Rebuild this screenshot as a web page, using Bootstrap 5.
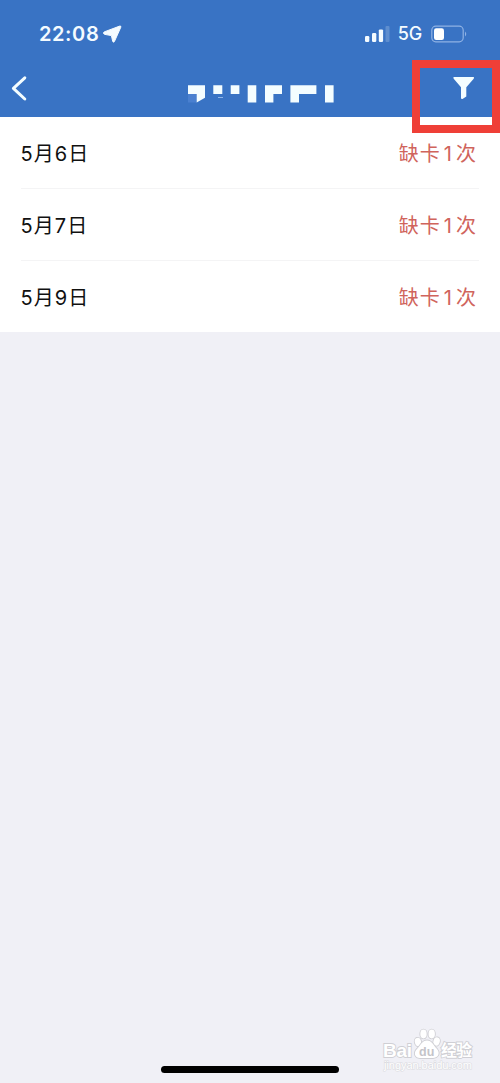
<!DOCTYPE html>
<html lang="zh-CN">
<head>
<meta charset="utf-8">
<meta name="viewport" content="width=device-width, initial-scale=1">
<title>缺卡</title>
<link rel="stylesheet" href="https://cdn.jsdelivr.net/npm/bootstrap@5.3.0/dist/css/bootstrap.min.css">
<style>
body { background: #f0f0f6; font-family: Inter, "Noto Sans CJK SC", sans-serif; }
.screen { width: 500px; height: 1083px; }
.top-area { background: #3973c4; height: 117px; color: #f4fbff; }
.status { height: 60px; padding: 7px 33px 0 39px; }
.clock { font-size: 20px; font-weight: 600; line-height: 24px; letter-spacing: .6px; }
.network { font-size: 18px; font-weight: 500; line-height: 24px; letter-spacing: -.2px; margin: 0 8px 0 8px; }
.title-bar { height: 57px; }
.records .list-group-item { height: 72px; margin: 0 21px; padding: 2px 2px 0 0; border: 0; border-bottom: 1px solid #f4f4f5; font-size: 20px; line-height: 30px; color: #111; }
.records .list-group-item:last-child { height: 71px; border-bottom: 0; }
.day { letter-spacing: 1.1px; margin-left: -.5px; }
.missed { color: #d0645c; letter-spacing: 1px; }
.count { margin: 0 3px 0 3px; }
.focus-box { left: 412px; top: 60px; width: 88px; height: 73px; border: 8px solid #ef3f37; }
.home-bar { width: 178px; height: 7px; border-radius: 4px; bottom: 10px; left: 161px; background: #000; }
.watermark { left: 380px; top: 1026px; }
svg { display: block; flex-shrink: 0; }
</style>
</head>
<body>
<main class="screen position-relative overflow-hidden">
  <header class="top-area">
    <div class="status d-flex align-items-center justify-content-between">
      <div class="d-flex align-items-center">
        <span class="clock">22:08</span>
        <svg class="ms-1" width="20" height="20" viewBox="103 23 20 20" fill="#f4fbff" stroke="#f4fbff" stroke-width="1"><path d="M104.2 30.9 119.7 25.1Q121.3 24.7 120.8 26.2L114.4 40.6Q113.4 42 112.7 40.3L111.4 34.6 104.4 33.3Q102.6 32.1 104.2 30.9Z"/></svg>
      </div>
      <div class="d-flex align-items-center">
        <svg width="26" height="18" viewBox="365 24 26 18" fill="#f4fbff"><rect x="366" y="35" width="4.3" height="6" rx="1.2"/><rect x="373" y="32" width="4.3" height="9" rx="1.2"/><rect x="379.8" y="28.4" width="4.3" height="12.6" rx="1.2"/><rect x="386.5" y="25" width="4" height="16" rx="1" opacity=".2"/></svg>
        <span class="network">5G</span>
        <svg width="37" height="18" viewBox="430 24 37 18"><rect x="431.8" y="25.2" width="31.4" height="15.6" rx="4" fill="none" stroke="#8fb2e4" stroke-width="1.2"/><rect x="434" y="27.2" width="10" height="11.8" rx="2.2" fill="#fff"/><path d="M465 30.5Q467.5 33 465 35.5Z" fill="#8fb2e4"/></svg>
      </div>
    </div>
    <div class="title-bar d-flex">
      <svg width="500" height="57" viewBox="0 60 500 57" fill="#f4fdff">
        <path d="M24.8 77.8 13.4 88.4 24.8 99" fill="none" stroke="#f4fdff" stroke-width="3" stroke-linecap="round" stroke-linejoin="round"/>
        <path d="M188 94h8.7v8.5H188z" fill="#4a80d0"/>
        <path d="M188 85.3h17v12.4l-8.3 4.8V94H188zM213.3 85.3h9V94h-9zM230.7 85.3h8.7V94h-8.7zM247.7 85.3h8.6v17.3h-8.6zM265 85.3h17V94h-8.6v8.6H265zM290.4 85.3h26V94H299v8.6h-8.6zM325 85.3h8.6v17.3H325z"/>
        <path d="M218 97.5h5" stroke="#8fb5e8"/>
        <path d="M454 77H473.4Q474.7 77.2 473.7 78.8L466.3 87.3V96.5L462.5 99Q461 99.3 461 98V87.3L453.7 78.8Q452.7 77.2 454 77Z"/>
      </svg>
    </div>
  </header>
  <section class="bg-white">
    <ul class="records list-group list-group-flush">
      <li class="list-group-item d-flex align-items-center justify-content-between"><span class="day">5月6日</span><span class="missed">缺卡<span class="count">1</span>次</span></li>
      <li class="list-group-item d-flex align-items-center justify-content-between"><span class="day">5月7日</span><span class="missed">缺卡<span class="count">1</span>次</span></li>
      <li class="list-group-item d-flex align-items-center justify-content-between"><span class="day">5月9日</span><span class="missed">缺卡<span class="count">1</span>次</span></li>
    </ul>
  </section>
  <div class="focus-box position-absolute"></div>
  <svg class="watermark position-absolute" width="100" height="48" viewBox="380 1026 100 48" fill="#fff" stroke="#cfcfd4" stroke-width="1.8" paint-order="stroke" font-family="Liberation Sans, Noto Sans CJK SC, sans-serif">
    <text x="383" y="1056.5" font-size="19" font-weight="bold" textLength="29">Bai</text>
    <ellipse cx="418" cy="1042" rx="3.2" ry="4.2" transform="rotate(-15 418 1042)"/>
    <ellipse cx="423.5" cy="1034" rx="3.2" ry="4.4"/>
    <ellipse cx="431.7" cy="1034" rx="3.2" ry="4.4"/>
    <ellipse cx="436.6" cy="1041.5" rx="3.2" ry="4.2" transform="rotate(15 436.6 1041.5)"/>
    <path d="M427 1040.5C432 1040.5 433 1045 437 1049C441 1054 437 1058 433 1058H420C415 1058 413 1053 417 1049C421 1045 422 1040.5 427 1040.5Z"/>
    <text x="419" y="1055.5" font-size="12.5" font-weight="bold" fill="#c4c4c9" stroke="none">du</text>
    <text x="441" y="1056" font-size="16" font-weight="bold" textLength="31">经验</text>
    <text x="384" y="1069" font-size="11" stroke="#dcdce1" stroke-width="1.2" textLength="88">jingyan.baidu.com</text>
  </svg>
  <div class="home-bar position-absolute"></div>
</main>
<script src="https://cdn.jsdelivr.net/npm/bootstrap@5.3.0/dist/js/bootstrap.bundle.min.js"></script>
</body>
</html>
